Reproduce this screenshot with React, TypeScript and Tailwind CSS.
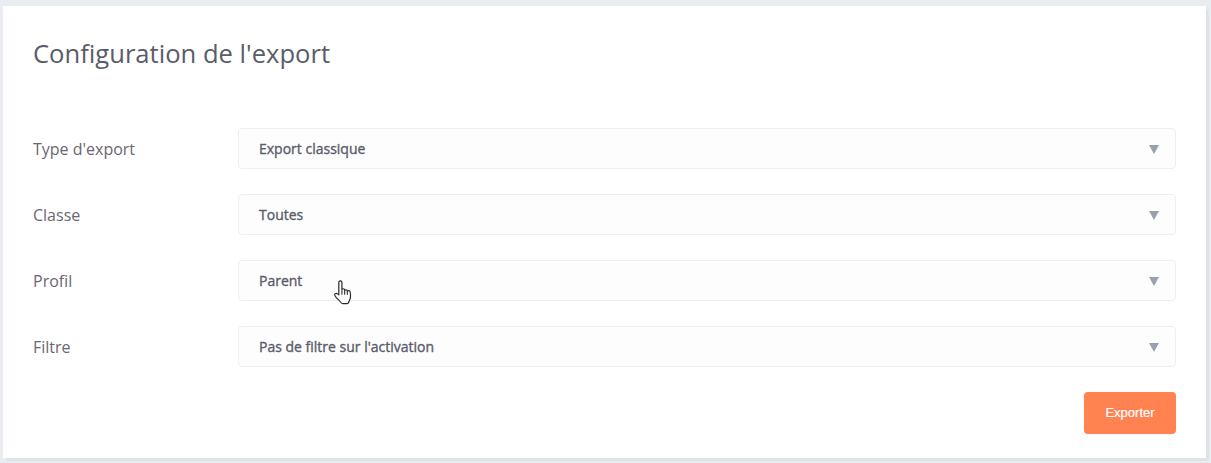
const rows = [
  { label: "Type d'export", value: 'Export classique' },
  { label: 'Classe', value: 'Toutes' },
  { label: 'Profil', value: 'Parent', hover: true },
  { label: 'Filtre', value: "Pas de filtre sur l'activation" },
];

function HandCursor() {
  return (
    <svg
      width="18"
      height="25"
      viewBox="0 0 15 23"
      preserveAspectRatio="none"
      className="absolute left-[95px] top-[19px]"
    >
      <path
        d="M4 2c0-1.600 2.600-1.600 2.600 0v7c0-1.300 2.300-1.300 2.300 0v.8c0-1.200 2.200-1.200 2.200 0v.8c0-1.100 2.200-1.100 2.300.2.400 2 .5 4.200.1 6.200-.3 1.300-.9 2.500-1.300 3.700-.2.700-.6 1-1.300 1H7.500c-.8 0-1.300-.4-1.700-1-1.100-1.600-2.600-3-3.900-4.500C1.100 15.100.4 14.200.6 13.300c.2-1 1.300-1.300 2.100-.7L4 13.700V2z"
        fill="#fff"
        stroke="#2a2a2a"
        strokeWidth="1"
        strokeLinejoin="round"
      />
      <path d="M6.600 9.500v4M8.900 10v3.500M11.100 10.500v3" stroke="#2a2a2a" strokeWidth="0.9" fill="none" />
    </svg>
  );
}

export default function App() {
  return (
    <div className="h-[463px] w-[1211px] overflow-hidden bg-[#e9ecf1] pl-[3px] pt-[6px] font-['Open_Sans',sans-serif]">
      <div className="h-[452px] w-[1203px] bg-white px-[30px] pt-[30px] shadow-[3px_3px_0_#dfe3e9]">
        <h1 className="text-[25.6px] leading-[36px] text-[#5a5c69]">Configuration de l'export</h1>
        <div className="mt-[56px] flex flex-col gap-[25px]">
          {rows.map((row) => (
            <div key={row.label} className="flex items-center">
              <label className="w-[205px] text-[16px] text-[#6b6670]">{row.label}</label>
              <div className="relative flex h-[41px] w-[938px] items-center justify-between rounded-[4px] border border-[#eeeff3] bg-[#fdfdfe] pl-[20px] pr-[16px]">
                <span className="text-[14px] font-medium text-[#5a5c69] [-webkit-text-stroke:0.35px_#5a5c69]">
                  {row.value}
                </span>
                <svg width="10" height="9" viewBox="0 0 10 9" className="mt-[1px]">
                  <path d="M0 0h10L5 9z" fill="#9aa0ad" />
                </svg>
                {row.hover && <HandCursor />}
              </div>
            </div>
          ))}
        </div>
        <div className="mt-[25px] flex justify-end">
          <button className="h-[42px] w-[92px] rounded-[4px] bg-[#ff8250] font-['Liberation_Sans',sans-serif] text-[13px] text-white [-webkit-text-stroke:0.2px_#fff]">
            Exporter
          </button>
        </div>
      </div>
    </div>
  );
}
